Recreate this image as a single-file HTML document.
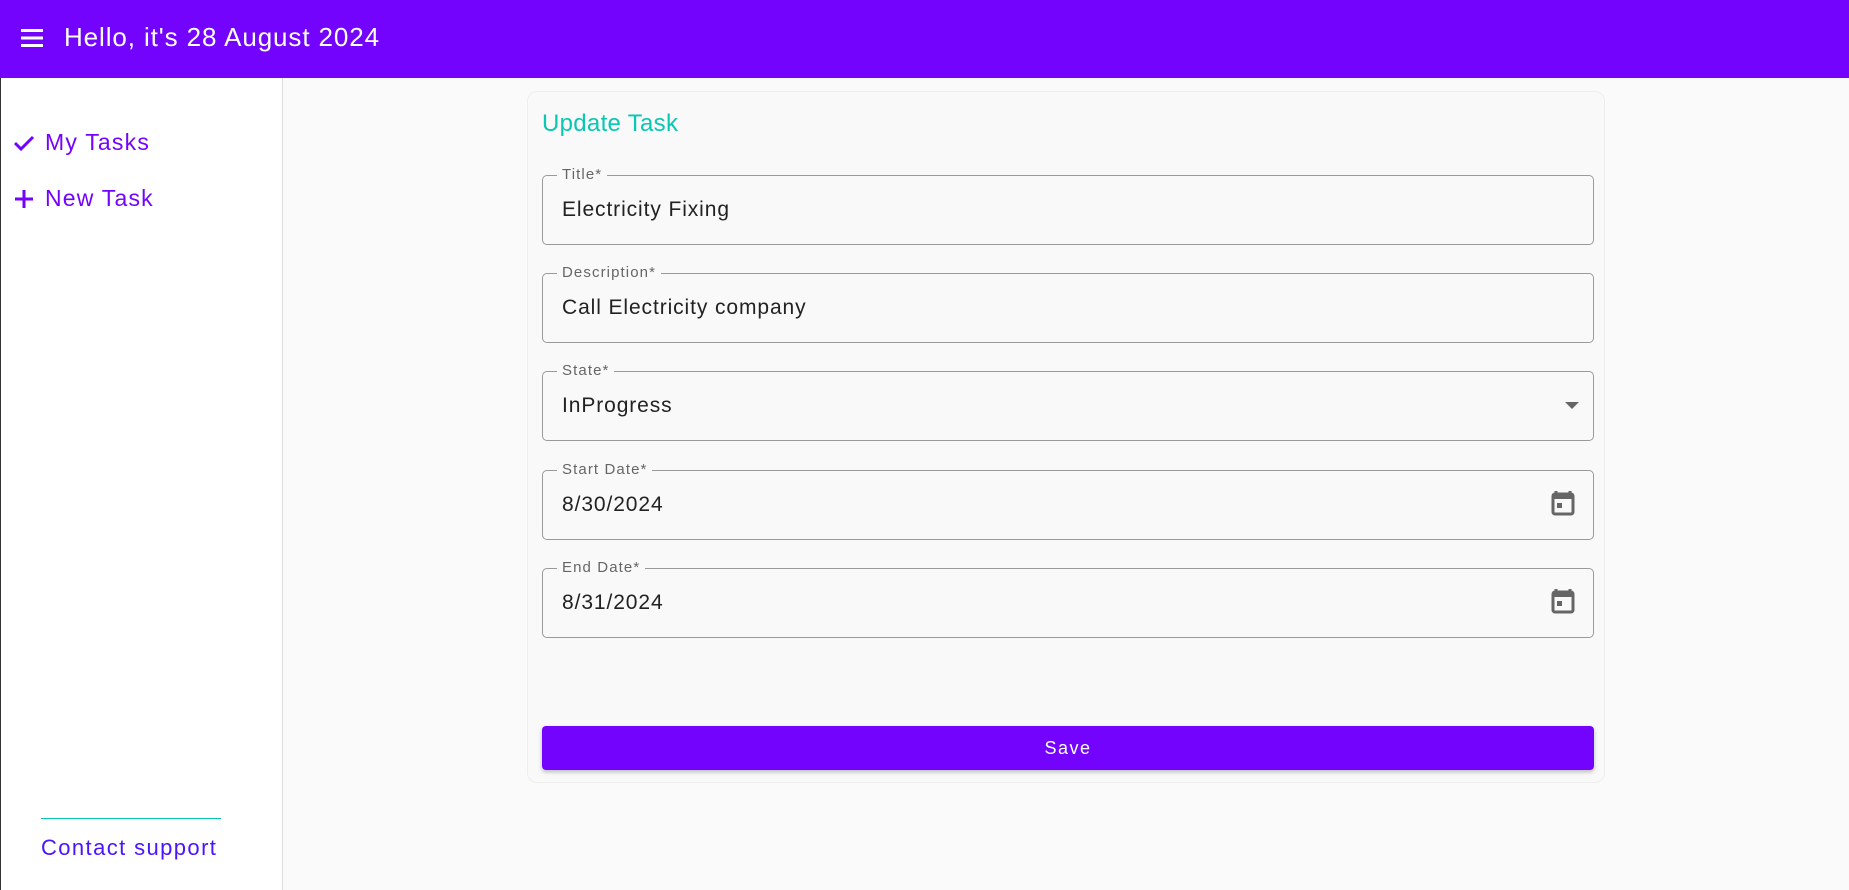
<!DOCTYPE html>
<html><head><style>
*{box-sizing:border-box;margin:0;padding:0}
body{width:1849px;height:890px;overflow:hidden;background:#fafafa;font-family:"Liberation Sans",sans-serif;position:relative}
.hdr{position:absolute;left:0;top:0;width:1849px;height:78px;background:#7303fd;color:#fff}
.hdr .t{position:absolute;left:64px;top:22px;font-size:26px;letter-spacing:0.9px}
.side{position:absolute;left:0;top:78px;width:283px;height:812px;background:#fff;border-right:1px solid #ddd;border-left:1px solid #333}
.item{position:absolute;left:12px;color:#7303fd;font-size:23px;display:flex;align-items:center;letter-spacing:1.2px}
.item svg{margin-right:10px}
.card{position:absolute;left:527px;top:91px;width:1078px;height:692px;border:1px solid #eee;border-radius:10px;background:#f9f9f9}
.ttl{position:absolute;left:14px;top:18px;font-size:24px;color:#08c7b4;letter-spacing:0.3px}
.f{position:absolute;left:14px;width:1052px;height:70px;border:1px solid #9a9a9a;border-radius:5px}
.f .l{position:absolute;left:14px;top:-10px;padding:0 5px;background:#f9f9f9;font-size:15px;color:#666;letter-spacing:1.1px}
.f .v{position:absolute;left:19px;top:22px;font-size:21px;color:#222;letter-spacing:0.9px}
.btn{position:absolute;left:14px;top:634px;width:1052px;height:44px;background:#7303fd;border-radius:4px;color:#fff;font-size:18px;text-align:center;line-height:44px;letter-spacing:1.5px;box-shadow:0 2px 4px rgba(0,0,0,.25)}
.cal{position:absolute;right:18px;top:19px}
</style></head><body>
<div class="hdr">
<svg style="position:absolute;left:21px;top:28px" width="22" height="20"><rect y="1" width="22" height="3" fill="#fff"/><rect y="8.5" width="22" height="3" fill="#fff"/><rect y="16" width="22" height="3" fill="#fff"/></svg>
<div class="t">Hello, it's 28 August 2024</div></div>
<div class="side">
<div class="item" style="top:51px"><svg width="22" height="18" viewBox="0 0 22 18"><path d="M2 9l6 6L20 3" stroke="#7303fd" stroke-width="3" fill="none"/></svg>My Tasks</div>
<div class="item" style="top:107px"><svg width="22" height="22" viewBox="0 0 22 22"><path d="M11 2v18M2 11h18" stroke="#7303fd" stroke-width="3"/></svg>New Task</div>
<div style="position:absolute;left:40px;top:740px;width:180px;border-top:1px solid #08c7b4"></div>
<div style="position:absolute;left:40px;top:757px;font-size:22px;color:#4b14ff;letter-spacing:1.4px">Contact support</div>
</div>
<div class="card">
<div class="ttl">Update Task</div>
<div class="f" style="top:83px"><span class="l">Title*</span><span class="v">Electricity Fixing</span></div>
<div class="f" style="top:181px"><span class="l">Description*</span><span class="v">Call Electricity company</span></div>
<div class="f" style="top:279px"><span class="l">State*</span><span class="v">InProgress</span><svg style="position:absolute;right:14px;top:30px" width="14" height="8"><path d="M0 0h14L7 7z" fill="#666"/></svg></div>
<div class="f" style="top:378px"><span class="l">Start Date*</span><span class="v">8/30/2024</span><svg class="cal" width="24" height="26" viewBox="0 0 24 26"><path d="M5 1v4M19 1v4" stroke="#666" stroke-width="3"/><rect x="2" y="4" width="20" height="20" rx="2" fill="none" stroke="#666" stroke-width="3"/><rect x="2" y="4" width="20" height="5" fill="#666"/><rect x="6" y="13" width="5" height="5" fill="#666"/></svg></div>
<div class="f" style="top:476px"><span class="l">End Date*</span><span class="v">8/31/2024</span><svg class="cal" width="24" height="26" viewBox="0 0 24 26"><path d="M5 1v4M19 1v4" stroke="#666" stroke-width="3"/><rect x="2" y="4" width="20" height="20" rx="2" fill="none" stroke="#666" stroke-width="3"/><rect x="2" y="4" width="20" height="5" fill="#666"/><rect x="6" y="13" width="5" height="5" fill="#666"/></svg></div>
<div class="btn">Save</div>
</div>
</body></html>
